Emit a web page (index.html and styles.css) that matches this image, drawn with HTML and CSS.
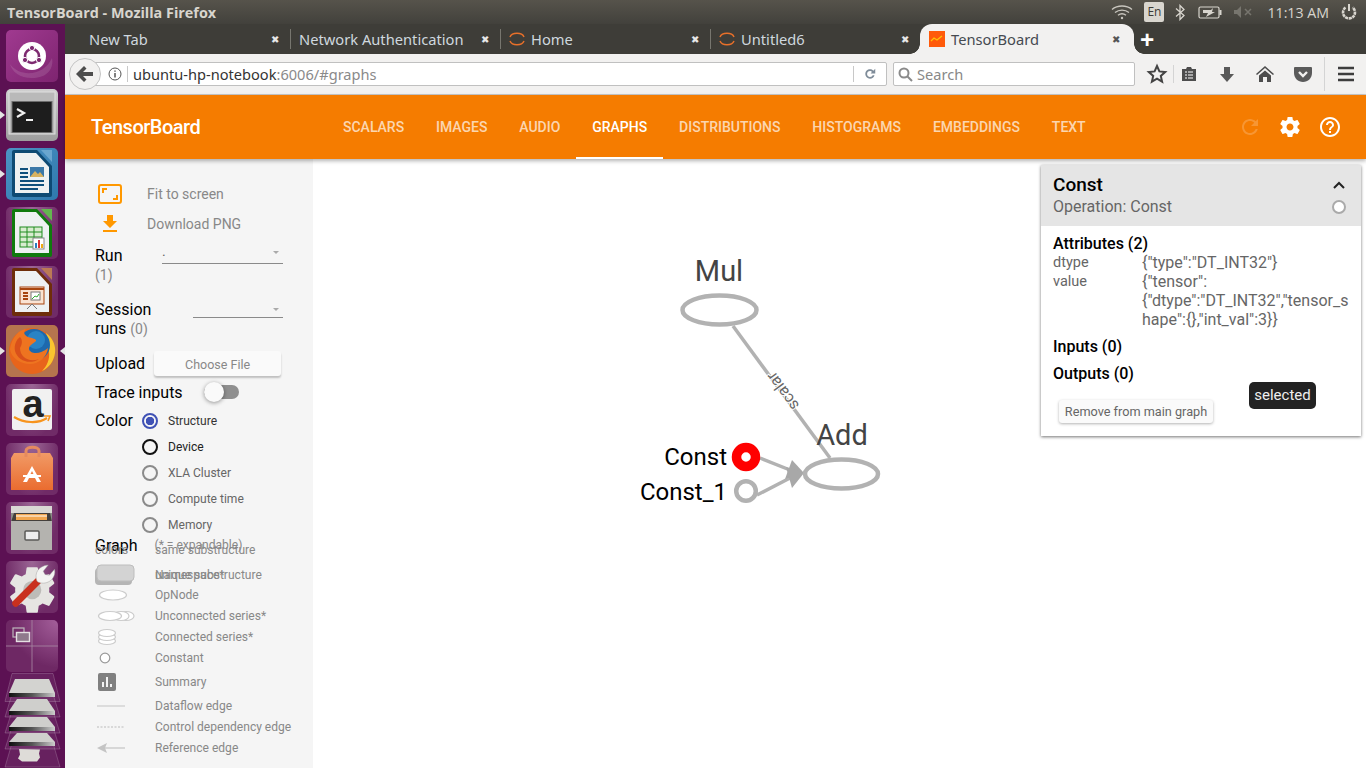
FILE: index.html
```html
<!DOCTYPE html>
<html lang="en">
<head>
    <meta charset="UTF-8">
    <meta name="viewport" content="width=device-width, initial-scale=1.0">
    <title>TensorBoard - Mozilla Firefox</title>
    <link rel="stylesheet" href="styles.css">
</head>
<body>

    <!-- desktop top panel -->
    <div class="panel-top">
        <span class="window-title">TensorBoard - Mozilla Firefox</span>
        <div class="tray">
            <svg class="tray-wifi" width="22" height="16" viewBox="0 0 22 16" fill="none" stroke="#c9c6bf" stroke-width="1.4"><path d="M1 5.5c5.500-4.600 14.500-4.600 20 0"/><path d="M4 8.500c4-3.200 10-3.200 14 0"/><path d="M7 11.200c2.400-1.800 5.600-1.800 8 0"/><circle cx="11" cy="14" r="1.200" fill="#c9c6bf" stroke="none"/></svg>
            <span class="tray-lang">En</span>
            <svg class="tray-bt" width="10" height="17" viewBox="0 0 10 17" fill="none" stroke="#d8d5ce" stroke-width="1.300"><path d="M1 4.500l8 7-4 4v-14l4 4-8 7"/></svg>
            <svg class="tray-battery" width="24" height="13" viewBox="0 0 24 13"><rect x="1" y="1" width="20" height="11" rx="1.500" fill="none" stroke="#d8d5ce" stroke-width="1.200"/><rect x="21.500" y="4" width="2" height="5" fill="#d8d5ce"/><path d="M5 4h8l2-2-1 4h3l-9 5 2-4H5z" fill="#d8d5ce"/></svg>
            <svg class="tray-volume" width="19" height="12" viewBox="0 0 19 12"><path d="M0 4h3l4-4v12l-4-4H0z" fill="#77756e"/><path d="M11 3l6 6M17 3l-6 6" stroke="#77756e" stroke-width="1.500"/></svg>
            <span class="tray-clock">11:13 AM</span>
            <svg class="tray-power" width="16" height="17" viewBox="0 0 16 17" fill="none" stroke="#d8d5ce" stroke-width="2"><path d="M8 0v7"/><path d="M4.500 3.500a6 6 0 1 0 7 0" stroke-width="2.600" stroke-dasharray="3 .6"/></svg>
        </div>
    </div>

    <div class="desktop">

        <!-- unity launcher -->
        <nav class="launcher">
            <div class="tile tile-dash">
                <svg width="52" height="52" viewBox="0 0 52 52"><path d="M4 34c10 14 34 12 42-6 2 10-4 20-20 20-12 0-20-6-22-14z" fill="#fff" fill-opacity=".12"/><circle cx="26" cy="26" r="14" fill="#fff"/><circle cx="26" cy="26" r="7" fill="none" stroke="#7d2a70" stroke-width="2.600"/><circle cx="26" cy="18" r="2.600" fill="#7d2a70" stroke="#fff"/><circle cx="19" cy="30" r="2.600" fill="#7d2a70" stroke="#fff"/><circle cx="33" cy="30" r="2.600" fill="#7d2a70" stroke="#fff"/></svg>
            </div>
            <div class="tile tile-terminal has-pip">
                <svg width="52" height="52" viewBox="0 0 52 52"><rect x="3" y="3" width="46" height="42" fill="#b9b9b9" stroke="#e0e0e0"/><rect x="5.500" y="12" width="41" height="32" fill="#6d6d6d"/><rect x="6.500" y="13" width="39" height="30" fill="#1d1d1d"/><path d="M11 20l7 4-7 4" fill="none" stroke="#f0f0f0" stroke-width="2.200"/><path d="M20 31h7" stroke="#f0f0f0" stroke-width="2"/></svg>
            </div>
            <div class="tile tile-writer has-pip">
                <svg width="52" height="52" viewBox="0 0 52 52"><path d="M35 2h11v12z" fill="#6aa6cf"/><path d="M6 4a2 2 0 0 1 2-2h23l15 16v29a2 2 0 0 1-2 2H8a2 2 0 0 1-2-2z" fill="#0e4a73"/><path d="M9 5h21l13 14v26H9z" fill="#eef1f2"/><path d="M14 21h8M14 25h8M14 29h8M14 33h24M14 37h24M14 41h18" stroke="#10507c" stroke-width="2"/><rect x="24" y="19" width="14" height="10" fill="#3b78a8"/><path d="M24 29l5-6 3 3 2-2 4 5z" fill="#d9b25f"/></svg>
            </div>
            <div class="tile tile-calc">
                <svg width="52" height="52" viewBox="0 0 52 52"><path d="M35 2h11v12z" fill="#63b64f"/><path d="M6 4a2 2 0 0 1 2-2h23l15 16v30a2 2 0 0 1-2 2H8a2 2 0 0 1-2-2z" fill="#0f7a0d"/><path d="M9 5h21l13 14v27H9z" fill="#eef1f2"/><rect x="14" y="20" width="22" height="20" fill="#d8ecd0" stroke="#1f8c1f"/><path d="M14 25h22M14 30h22M14 35h22M21 20v20M28 20v20" stroke="#1f8c1f"/><rect x="27" y="31" width="11" height="11" fill="#fff" stroke="#888"/><rect x="29" y="36" width="2" height="5" fill="#2a7ec0"/><rect x="32" y="33" width="2" height="8" fill="#d33"/><rect x="35" y="37" width="2" height="4" fill="#ea1"/></svg>
            </div>
            <div class="tile tile-impress">
                <svg width="52" height="52" viewBox="0 0 52 52"><path d="M35 2h11v12z" fill="#bb7a55"/><path d="M6 4a2 2 0 0 1 2-2h23l15 16v30a2 2 0 0 1-2 2H8a2 2 0 0 1-2-2z" fill="#6e2d0a"/><path d="M9 5h21l13 14v27H9z" fill="#eef1f2"/><rect x="14" y="21" width="24" height="17" fill="#fae3d2" stroke="#a8450f"/><path d="M14 23h24" stroke="#a8450f" stroke-width="2"/><path d="M17 27h5M17 30h5M17 33h5" stroke="#a8450f" stroke-width="2"/><rect x="25" y="26" width="9" height="8" fill="#fff" stroke="#777"/><path d="M26 33l3-3 2 1 2-3" stroke="#3a3" fill="none"/><path d="M26 38l-5 5M26 38l5 5" stroke="#777"/></svg>
            </div>
            <div class="tile tile-firefox has-pip has-active">
                <svg width="52" height="52" viewBox="0 0 52 52"><circle cx="26" cy="26" r="23" fill="#e8641b"/><path d="M40 8c7 5 10 13 9 20-1 8-6 15-13 18 5-5 8-12 7-19 0-6-1-13-3-19z" fill="#f9c52f"/><circle cx="28" cy="20" r="16" fill="#1d69ad"/><circle cx="30" cy="15" r="9" fill="#2f8fce" fill-opacity=".7"/><path d="M4 24C6 12 13 5 20 4c-3 3-2 6 2 8 4 1 9 2 8 4-3 3-7 4-7 8 1 5 11 6 19-1-1 9-9 16-18 16S5 33 4 24z" fill="#ee7420"/><path d="M14 12c3 3 2 8 0 11 0 9 9 15 19 11-9 6-21 2-24-8-1-6 1-11 5-14z" fill="#d9501a"/></svg>
            </div>
            <div class="tile tile-amazon">
                <svg width="52" height="52" viewBox="0 0 52 52"><rect x="6" y="5" width="40" height="41" rx="2" fill="#f1f1f1"/><text x="27" y="33" class="amazon-a">a</text><path d="M8 33c10 6 24 7 33 1" fill="none" stroke="#f7941d" stroke-width="2.200"/><path d="M38 32l6 0-2 5" fill="none" stroke="#f7941d" stroke-width="1.600"/></svg>
            </div>
            <div class="tile tile-software">
                <svg width="52" height="52" viewBox="0 0 52 52"><defs><linearGradient id="bagFill" x1="0" y1="0" x2="0" y2="1"><stop offset="0" stop-color="#f19a66"/><stop offset="1" stop-color="#ea6c2f"/></linearGradient></defs><path d="M8 10h36l3 5v32H5V15z" fill="url(#bagFill)"/><path d="M20 14V8c0-5 13-5 13 0v6" fill="none" stroke="#e58a5f" stroke-width="3"/><path d="M26 23l-9 16h4l2-4h6l2 4h4zM24.500 31l1.500-3 1.500 3z" fill="#fff"/><path d="M17 33h18" stroke="#fff" stroke-width="2"/></svg>
            </div>
            <div class="tile tile-files">
                <svg width="52" height="52" viewBox="0 0 52 52"><rect x="5" y="4" width="41" height="44" rx="1" fill="#8c8c88"/><rect x="5" y="4" width="41" height="7" fill="#d9d8d4"/><path d="M8 11h36l2 9H5z" fill="#44403c"/><path d="M10 12h31v6H10z" fill="#f1a64f"/><path d="M10 14h31" stroke="#fff"/><rect x="5" y="19" width="41" height="29" fill="#b4b3af"/><rect x="19" y="29" width="14" height="9" rx="1" fill="#eee" stroke="#5b5b58" stroke-width="1.500"/></svg>
            </div>
            <div class="tile tile-settings">
                <svg width="52" height="52" viewBox="0 0 24 24"><path fill="#e6e5e2" transform="translate(-.5 .8) scale(1.050)" d="M19.430 12.980c.04-.32.07-.64.07-.98s-.03-.66-.07-.98l2.110-1.650c.19-.15.24-.42.12-.64l-2-3.460c-.12-.22-.39-.3-.61-.22l-2.490 1c-.52-.4-1.080-.73-1.690-.98l-.38-2.650C14.460 2.180 14.250 2 14 2h-4c-.25 0-.46.18-.49.42l-.38 2.650c-.61.25-1.170.59-1.690.98l-2.490-1c-.23-.09-.49 0-.61.22l-2 3.460c-.13.22-.07.49.12.64l2.110 1.650c-.04.32-.07.65-.07.98s.03.66.07.98l-2.110 1.650c-.19.15-.24.42-.12.64l2 3.460c.12.22.39.3.61.22l2.490-1c.52.4 1.080.73 1.690.98l.38 2.650c.03.24.24.42.49.42h4c.25 0 .46-.18.49-.42l.38-2.650c.61-.25 1.170-.59 1.690-.98l2.490 1c.23.09.49 0 .61-.22l2-3.460c.12-.22.07-.49-.12-.64l-2.110-1.650z"/><circle cx="12.100" cy="13.400" r="4.200" fill="#bdbcb8"/><path d="M4.500 19.500L15 9" stroke="#c9301e" stroke-width="3.200" stroke-linecap="round"/><path d="M14.300 9.300C12.800 5.500 15.200 2.200 19.500 1.800L17.200 4.700l.8 1.500 2 .4 2.400-2.800c1 4-3.200 7.700-7.400 6z" fill="#f4f4f2" stroke="#999" stroke-width=".2"/></svg>
            </div>
            <div class="tile tile-workspace">
                <svg width="52" height="52" viewBox="0 0 52 52"><path d="M26 0v52M0 26h52" stroke="#a98aa5" stroke-width=".8"/><rect x="7" y="8" width="11" height="9" fill="none" stroke="#bdb7bb" stroke-width="1.200"/><rect x="10.500" y="12.500" width="13" height="9" fill="#8f7a8c" stroke="#e5e0e3" stroke-width="1.400"/></svg>
            </div>
            <div class="trash-stack">
                <svg width="65" height="96" viewBox="0 0 65 96">
                    <defs><linearGradient id="discBand" x1="0" y1="0" x2="1" y2="0"><stop offset="0" stop-color="#111"/><stop offset=".5" stop-color="#555"/><stop offset="1" stop-color="#ccc"/></linearGradient></defs>
                    <g fill="#fff" fill-opacity=".07" stroke="#fff" stroke-opacity=".18">
                        <path d="M12 .5h41l7 28H5z"/>
                        <path d="M12 21h41l7 23H5z"/>
                        <path d="M12 38h41l7 22H5z"/>
                        <path d="M12 54h41l7 22H5z"/>
                        <path d="M12 70h41l7 24H5z"/>
                    </g>
                    <path d="M15 6h34l6 14H9z" fill="#d3d3d0"/><rect x="9" y="20" width="46" height="4" fill="url(#discBand)"/>
                    <path d="M17 26h30l8 12H9z" fill="#cfcfcc"/><rect x="9" y="38" width="46" height="4" fill="url(#discBand)"/>
                    <path d="M17 44h30l8 10H9z" fill="#cfcfcc"/><rect x="9" y="54" width="46" height="4" fill="url(#discBand)"/>
                    <path d="M17 60h30l8 9H9z" fill="#cfcfcc"/><rect x="9" y="69" width="46" height="4" fill="url(#discBand)"/>
                    <path d="M19 76l21 .5-1 4 1 4-3 4H22l-4-3 2-4z" fill="#dedcd8"/>
                </svg>
            </div>
        </nav>

        <div class="browser">
            <!-- firefox tab strip -->
            <div class="tabstrip">
                <div class="tab tab-first"><span class="tab-label">New Tab</span><span class="tab-close">&#10006;</span></div>
                <div class="tab"><span class="tab-label">Network Authentication</span><span class="tab-close">&#10006;</span></div>
                <div class="tab">
                    <svg class="favicon" width="16" height="16" viewBox="0 0 16 16" fill="none" stroke="#e8702a" stroke-width="1.500"><path d="M1 6c2-5 12-5 14 0"/><path d="M1 10c2 5 12 5 14 0"/></svg>
                    <span class="tab-label">Home</span><span class="tab-close">&#10006;</span>
                </div>
                <div class="tab">
                    <svg class="favicon" width="16" height="16" viewBox="0 0 16 16" fill="none" stroke="#e8702a" stroke-width="1.500"><path d="M1 6c2-5 12-5 14 0"/><path d="M1 10c2 5 12 5 14 0"/></svg>
                    <span class="tab-label">Untitled6</span><span class="tab-close">&#10006;</span>
                </div>
                <div class="tab tab-active">
                    <svg class="favicon" width="16" height="16" viewBox="0 0 16 16"><rect width="16" height="16" fill="#ff5a0a"/><path d="M2 10l3-3 3 2 5-4" fill="none" stroke="#ffc107" stroke-width="1.300"/></svg>
                    <span class="tab-label">TensorBoard</span><span class="tab-close">&#10006;</span>
                </div>
                <span class="tab-new">+</span>
            </div>

            <!-- firefox nav bar -->
            <div class="navbar">
                <div class="back-btn">
                    <svg width="18" height="16" viewBox="0 0 18 16"><path d="M8 0l2.500 2.500L7 6h10v4H7l3.500 3.500L8 16 0 8z" fill="#4d4d4d"/></svg>
                </div>
                <div class="urlbar">
                    <svg class="info-icon" width="14" height="14" viewBox="0 0 14 14" fill="none" stroke="#555"><circle cx="7" cy="7" r="6"/><path d="M7 6v4.500M7 3.500v1.300" stroke-width="1.500"/></svg>
                    <span class="url-sep"></span>
                    <span class="url-host">ubuntu-hp-notebook</span><span class="url-rest">:6006/#graphs</span>
                    <span class="url-sep url-sep-end"></span>
                    <svg class="reload-icon" width="14" height="14" viewBox="0 0 24 24"><path fill="#7f8c99" d="M17.650 6.350C16.200 4.900 14.210 4 12 4c-4.420 0-7.990 3.580-7.990 8s3.570 8 7.990 8c3.730 0 6.840-2.550 7.730-6h-3.080c-.82 1.330-2.040 3-4.650 3-2.760 0-5-2.240-5-5s2.240-5 5-5c1.660 0 2.640.69 3.220 1.780L13 11h8V3l-3.350 3.350z"/></svg>
                </div>
                <div class="searchbar">
                    <svg width="15" height="15" viewBox="0 0 15 15" fill="none" stroke="#8a8a8a" stroke-width="2"><circle cx="6" cy="6" r="4.500"/><path d="M9.500 9.500L14 14"/></svg>
                    <span>Search</span>
                </div>
                <div class="tool-icons">
                    <svg class="tool tool-star" width="24" height="24" viewBox="0 0 24 24"><path d="M12 4l2.400 5.400 5.800.6-4.400 3.900 1.300 5.700-5.100-3-5.100 3 1.300-5.700L3.800 10l5.800-.6z" fill="none" stroke="#444" stroke-width="2"/></svg>
                    <span class="tool-sep"></span>
                    <svg class="tool" width="24" height="24" viewBox="0 0 24 24"><path d="M5 7h4l1-2h4l1 2h4v12H5z" fill="#4d4d4d"/><path d="M8 10h2M11 10h5M8 13h2M11 13h5M8 16h2M11 16h5" stroke="#fff" stroke-width="1.200"/></svg>
                    <svg class="tool" width="24" height="24" viewBox="0 0 24 24"><path d="M9 5h6v7h4l-7 8-7-8h4z" fill="#595959"/></svg>
                    <svg class="tool" width="24" height="24" viewBox="0 0 24 24"><path d="M12 4L3 12l1 1 8-7 8 7 1-1z" fill="#4d4d4d"/><path d="M6 13.500l6-5 6 5V20h-4v-5h-4v5H6z" fill="#4d4d4d"/></svg>
                    <svg class="tool" width="24" height="24" viewBox="0 0 24 24"><path d="M4 5h16a1 1 0 0 1 1 1v5c0 5-4 9-9 9s-9-4-9-9V6a1 1 0 0 1 1-1z" fill="#5a5a5a"/><path d="M8 10l4 4 4-4" fill="none" stroke="#f2f1f0" stroke-width="2.400"/></svg>
                    <span class="tool-sep tool-sep-menu"></span>
                    <svg class="tool" width="24" height="24" viewBox="0 0 24 24"><path d="M4 6h16M4 12h16M4 18h16" stroke="#3d3d3d" stroke-width="2.600"/></svg>
                </div>
            </div>

            <!-- tensorboard toolbar -->
            <header class="tb-header">
                <span class="tb-title">TensorBoard</span>
                <div class="tb-tabs">
                    <a class="tb-tab">Scalars</a>
                    <a class="tb-tab">Images</a>
                    <a class="tb-tab">Audio</a>
                    <a class="tb-tab tb-tab-on">Graphs</a>
                    <a class="tb-tab">Distributions</a>
                    <a class="tb-tab">Histograms</a>
                    <a class="tb-tab">Embeddings</a>
                    <a class="tb-tab">Text</a>
                </div>
                <div class="tb-actions">
                    <svg class="tb-reload" width="24" height="24" viewBox="0 0 24 24"><path d="M17.650 6.350C16.200 4.900 14.210 4 12 4c-4.420 0-7.990 3.580-7.990 8s3.570 8 7.990 8c3.730 0 6.840-2.550 7.730-6h-2.080c-.82 2.330-3.040 4-5.650 4-3.310 0-6-2.690-6-6s2.690-6 6-6c1.660 0 3.140.69 4.220 1.780L13 11h7V4l-2.350 2.350z"/></svg>
                    <svg width="24" height="24" viewBox="0 0 24 24"><path d="M19.430 12.980c.04-.32.07-.64.07-.98s-.03-.66-.07-.98l2.110-1.650c.19-.15.24-.42.12-.64l-2-3.460c-.12-.22-.39-.3-.61-.22l-2.490 1c-.52-.4-1.080-.73-1.690-.98l-.38-2.650C14.460 2.180 14.250 2 14 2h-4c-.25 0-.46.18-.49.42l-.38 2.650c-.61.25-1.170.59-1.690.98l-2.490-1c-.23-.09-.49 0-.61.22l-2 3.460c-.13.22-.07.49.12.64l2.110 1.650c-.04.32-.07.65-.07.98s.03.66.07.98l-2.110 1.650c-.19.15-.24.42-.12.64l2 3.460c.12.22.39.3.61.22l2.490-1c.52.4 1.080.73 1.690.98l.38 2.650c.03.24.24.42.49.42h4c.25 0 .46-.18.49-.42l.38-2.650c.61-.25 1.170-.59 1.690-.98l2.490 1c.23.09.49 0 .61-.22l2-3.460c.12-.22.07-.49-.12-.64l-2.110-1.650zM12 15.500c-1.930 0-3.500-1.570-3.500-3.500s1.570-3.500 3.500-3.500 3.500 1.570 3.500 3.500-1.570 3.500-3.500 3.500z"/></svg>
                    <svg width="24" height="24" viewBox="0 0 24 24"><path d="M11 18h2v-2h-2v2zm1-16C6.480 2 2 6.480 2 12s4.480 10 10 10 10-4.480 10-10S17.520 2 12 2zm0 18c-4.410 0-8-3.590-8-8s3.590-8 8-8 8 3.590 8 8-3.590 8-8 8zm0-14c-2.210 0-4 1.790-4 4h2c0-1.100.9-2 2-2s2 .9 2 2c0 2-3 1.750-3 5h2c0-2.250 3-2.500 3-5 0-2.210-1.790-4-4-4z"/></svg>
                </div>
            </header>

            <div class="tb-main">
                <!-- graph controls -->
                <aside class="sidebar">
                    <div class="action">
                        <svg width="24" height="20" viewBox="0 0 24 20" fill="none" stroke="#ff9800"><rect x="1" y="1" width="22" height="18" rx="2" stroke-width="2"/><path d="M5 9V5h4M19 11v4h-4" stroke-width="2"/></svg>
                        <span>Fit to screen</span>
                    </div>
                    <div class="action">
                        <svg width="24" height="24" viewBox="0 0 24 24"><path fill="#ff9800" d="M19 9h-4V3H9v6H5l7 7 7-7zM5 18v2h14v-2H5z"/></svg>
                        <span>Download PNG</span>
                    </div>

                    <div class="run-row">
                        <span class="field-label">Run</span>
                        <div class="select select-run"><span>.</span><i class="caret"></i></div>
                    </div>
                    <div class="count count-run">(1)</div>

                    <div class="session-row">
                        <span class="field-label">Session<br>runs <small class="count">(0)</small></span>
                        <div class="select select-session"><i class="caret"></i></div>
                    </div>

                    <div class="upload-row">
                        <span class="field-label">Upload</span>
                        <div class="file-btn">Choose File</div>
                    </div>

                    <div class="trace-row">
                        <span class="field-label">Trace inputs</span>
                        <div class="toggle"><i class="toggle-knob"></i></div>
                    </div>

                    <div class="color-block">
                        <span class="field-label">Color</span>
                        <div class="radios">
                            <div class="radio radio-on"><i></i>Structure</div>
                            <div class="radio radio-dark"><i></i>Device</div>
                            <div class="radio"><i></i>XLA Cluster</div>
                            <div class="radio"><i></i>Compute time</div>
                            <div class="radio"><i></i>Memory</div>
                        </div>
                    </div>

                    <div class="graph-row">
                        <span class="field-label">Graph</span>
                        <span class="graph-note">(* = expandable)</span>
                    </div>

                    <div class="legend">
                        <span class="key-colors">colors</span>
                        <span class="key-first">same substructure</span>
                        <svg class="key-ns" width="40" height="22" viewBox="0 0 40 22"><rect x="0" y="4" width="37" height="17" rx="4" fill="#b5b5b5"/><rect x="2" y="1" width="37" height="16" rx="4" fill="#d3d3d3" stroke="#bdbdbd"/></svg>
                        <span class="key-overlap">unique substructure</span>
                        <span class="key-overlap">Namespace*</span>
                        <svg width="40" height="14" viewBox="0 0 40 14"><ellipse cx="18" cy="7" rx="13.500" ry="5" fill="#fff" stroke="#ccc" stroke-width="1.200"/></svg>
                        <span>OpNode</span>
                        <svg width="40" height="14" viewBox="0 0 40 14" fill="#fff" stroke="#ccc" stroke-width="1.200"><ellipse cx="31" cy="7" rx="8" ry="4.500"/><ellipse cx="26" cy="7" rx="8" ry="4.500"/><ellipse cx="15" cy="7" rx="11.500" ry="4.500"/></svg>
                        <span>Unconnected series*</span>
                        <svg width="40" height="18" viewBox="0 0 40 18" fill="#fff" stroke="#ccc" stroke-width="1.200"><ellipse cx="12" cy="13" rx="8.500" ry="3.500"/><ellipse cx="12" cy="9" rx="8.500" ry="3.500"/><ellipse cx="12" cy="5" rx="8.500" ry="3.500"/></svg>
                        <span>Connected series*</span>
                        <svg width="40" height="14" viewBox="0 0 40 14"><circle cx="10" cy="7" r="4.800" fill="#fff" stroke="#999" stroke-width="1.200"/></svg>
                        <span>Constant</span>
                        <svg width="40" height="18" viewBox="0 0 40 18"><rect x="3" y="0" width="18" height="18" rx="2" fill="#808080"/><path d="M8 9v5M12 4v10M16 11v3" stroke="#fff" stroke-width="1.800"/></svg>
                        <span>Summary</span>
                        <svg width="40" height="4" viewBox="0 0 40 4"><path d="M2 2h28" stroke="#ccc" stroke-width="1.200"/></svg>
                        <span>Dataflow edge</span>
                        <svg width="40" height="4" viewBox="0 0 40 4"><path d="M2 2h28" stroke="#bbb" stroke-width="1.200" stroke-dasharray="2 1.500"/></svg>
                        <span>Control dependency edge</span>
                        <svg width="40" height="14" viewBox="0 0 40 14"><path d="M2 7l10-5-2 5 2 5z" fill="#c4c4c4"/><path d="M8 7h22" stroke="#c4c4c4" stroke-width="1.200"/></svg>
                        <span>Reference edge</span>
                    </div>
                </aside>

                <!-- graph canvas -->
                <section class="canvas">
                    <svg class="graph" width="1053" height="609" viewBox="313 159 1053 609">
                        <path class="edge" d="M733 326L830 458"/>
                        <path class="edge" d="M760 458L790 470"/>
                        <path class="edge" d="M757 495L790 478"/>
                        <path class="arrow" d="M804 473L792 460L785 479z"/>
                        <path class="arrow" d="M804 473L786 467L792 488z"/>
                        <text class="edge-label" transform="translate(783 391) rotate(233.700)" y="5">scalar</text>
                        <ellipse class="node" cx="719.500" cy="310" rx="37" ry="14.500"/>
                        <ellipse class="node" cx="841.500" cy="474" rx="36.500" ry="14.500"/>
                        <circle class="node-picked" cx="746" cy="457" r="9.500"/>
                        <circle class="node-const" cx="746" cy="491" r="9.800"/>
                        <text class="node-title" x="719" y="281">Mul</text>
                        <text class="node-title" x="842" y="445">Add</text>
                        <text class="const-label" x="727" y="465">Const</text>
                        <text class="const-label" x="727" y="500">Const_1</text>
                    </svg>

                    <div class="info-card">
                        <div class="info-head">
                            <div class="info-title">
                                <span class="info-name">Const</span>
                                <svg width="14" height="10" viewBox="0 0 14 10"><path d="M2 8l5-5 5 5" fill="none" stroke="#222" stroke-width="2"/></svg>
                            </div>
                            <div class="info-sub">
                                <span>Operation: Const</span>
                                <i class="info-dot"></i>
                            </div>
                        </div>
                        <div class="info-body">
                            <div class="info-section">Attributes (2)</div>
                            <div class="attr"><span class="attr-key">dtype</span><span class="attr-val">{"type":"DT_INT32"}</span></div>
                            <div class="attr"><span class="attr-key">value</span><span class="attr-val">{"tensor":<br>{"dtype":"DT_INT32","tensor_s<br>hape":{},"int_val":3}}</span></div>
                            <div class="info-section info-inputs">Inputs (0)</div>
                            <div class="info-section info-outputs">Outputs (0)</div>
                            <div class="info-foot">
                                <div class="remove-btn">Remove from main graph</div>
                                <div class="tooltip">selected</div>
                            </div>
                        </div>
                    </div>
                </section>
            </div>
        </div>
    </div>

</body>
</html>
```

FILE: styles.css
```css
* {
    box-sizing: border-box;
}

html, body {
    margin: 0;
    height: 768px;
    overflow: hidden;
}

body {
    font-family: 'Roboto', 'Liberation Sans', sans-serif;
    background-color: #fff;
}

svg {
    display: block;
    flex: none;
}

/* top panel */
.panel-top {
    height: 24px;
    display: flex;
    align-items: center;
    justify-content: space-between;
    background: linear-gradient(#56534b, #42413c);
    font-family: 'Open Sans', 'Noto Sans', sans-serif;
}

.window-title {
    margin-left: 7px;
    font-size: 14.4px;
    font-weight: 700;
    color: #d8d5ce;
}

.tray {
    display: flex;
    align-items: center;
}

.tray-wifi { margin-right: 11px; }

.tray-lang {
    width: 20px;
    height: 20px;
    margin-right: 11px;
    background-color: #d9d6cf;
    border-radius: 2px;
    color: #3c3b37;
    font-size: 12px;
    line-height: 20px;
    text-align: center;
}

.tray-bt { margin-right: 13px; }
.tray-battery { margin-right: 12px; }
.tray-volume { margin-right: 14px; }

.tray-clock {
    margin-right: 12px;
    font-size: 14.2px;
    color: #d8d5ce;
}

.tray-power { margin-right: 9px; }

.desktop {
    display: flex;
    height: 744px;
}

/* launcher */
.launcher {
    width: 65px;
    flex: none;
    padding: 6px 0 0 6px;
    display: flex;
    flex-direction: column;
    gap: 7px;
    background-color: #5c1153;
}

.tile {
    width: 52px;
    height: 52px;
    flex: none;
    position: relative;
    border-radius: 5px;
    background: radial-gradient(ellipse at 50% 0, #9b6695, #702b67 75%);
}

.tile-dash { background: linear-gradient(135deg, #a03a90, #7e2470); }
.tile-terminal { background: linear-gradient(#cfcfcf, #9d9d9d); }
.tile-writer { background: linear-gradient(135deg, #4c93c4, #2e78ad); }
.tile-firefox { background: #b5744e; }
.tile-workspace { background: radial-gradient(ellipse at 100% 0, #a45f9b, #6e2864 65%); }

.has-pip::before {
    content: "";
    position: absolute;
    left: -6px;
    top: 22px;
    border: 4px solid transparent;
    border-left: 5px solid #e4e4e4;
}

.has-active::after {
    content: "";
    position: absolute;
    right: -7px;
    top: 22px;
    border: 4px solid transparent;
    border-right: 5px solid #e4e4e4;
}

.amazon-a {
    font-family: 'Liberation Sans', sans-serif;
    font-size: 38px;
    font-weight: 700;
    fill: #222;
    text-anchor: middle;
}

.trash-stack {
    margin: -6px 0 0 -6px;
}

.browser {
    flex: 1;
    min-width: 0;
    display: flex;
    flex-direction: column;
}

/* tab strip */
.tabstrip {
    height: 30px;
    flex: none;
    display: flex;
    background-color: #3e3d38;
    font-family: 'Noto Sans', 'Open Sans', sans-serif;
    font-size: 14.7px;
    color: #cfd8df;
}

.tab {
    width: 210px;
    flex: none;
    display: flex;
    align-items: center;
    padding-left: 9px;
    position: relative;
}

.tab::before {
    content: "";
    position: absolute;
    left: 0;
    top: 5px;
    bottom: 5px;
    width: 1px;
    background-color: #77766f;
}

.tab-first {
    width: 225px;
    padding-left: 24px;
}

.tab-first::before {
    display: none;
}

.favicon {
    margin-right: 6px;
}

.tab-close {
    margin-left: auto;
    margin-right: 11px;
    font-size: 10px;
    color: #e8e8e8;
}

.tab-active {
    width: 214px;
    padding-left: 9px;
    background-color: #f2f1f0;
    border-radius: 12px 12px 0 0;
    color: #454a50;
}

.tab-active::before {
    left: -10px;
    top: auto;
    bottom: 0;
    width: 10px;
    height: 10px;
    background: radial-gradient(circle at 0 0, transparent 9.500px, #f2f1f0 10px);
}

.tab-active::after {
    content: "";
    position: absolute;
    right: -10px;
    bottom: 0;
    width: 10px;
    height: 10px;
    background: radial-gradient(circle at 100% 0, transparent 9.500px, #f2f1f0 10px);
}

.tab-active .tab-close {
    margin-right: 14px;
    color: #555;
}

.tab-new {
    margin-left: 6px;
    font-size: 25px;
    font-weight: 700;
    line-height: 30px;
    color: #fff;
}

/* nav bar */
.navbar {
    height: 41px;
    flex: none;
    display: flex;
    align-items: center;
    padding-left: 4px;
    background-color: #f2f1f0;
    border-bottom: 1px solid #c8c8c8;
    font-family: 'Noto Sans', 'Open Sans', sans-serif;
    font-size: 14.6px;
}

.back-btn {
    width: 32px;
    height: 32px;
    z-index: 1;
    display: flex;
    align-items: center;
    justify-content: center;
    background-color: #f2f1f0;
    border: 1px solid #c4c4c4;
    border-radius: 50%;
}

.urlbar {
    width: 794px;
    height: 24px;
    margin-left: -8px;
    padding-left: 14px;
    display: flex;
    align-items: center;
    background-color: #fff;
    border: 1px solid #c0c0c0;
    border-radius: 0 2px 2px 0;
}

.info-icon {
    margin-right: 5px;
}

.url-sep {
    width: 1px;
    height: 16px;
    margin-right: 5px;
    background-color: #c8c8c8;
}

.url-host { color: #333; }
.url-rest { color: #8a8a8a; }

.url-sep-end {
    margin-left: auto;
    margin-right: 9px;
}

.reload-icon {
    margin-right: 9px;
}

.searchbar {
    width: 242px;
    height: 24px;
    margin-left: 6px;
    padding-left: 4px;
    display: flex;
    align-items: center;
    gap: 4px;
    background-color: #fff;
    border: 1px solid #c0c0c0;
    border-radius: 2px;
    color: #888;
}

.tool-icons {
    display: flex;
    align-items: center;
    gap: 14px;
    margin-left: 10px;
}

.tool-star {
    margin-right: -10px;
}

.tool-sep {
    width: 1px;
    height: 18px;
    background-color: #d4d4d4;
    margin-right: -11px;
}

.tool-sep-menu {
    height: 34px;
    margin: 0 -5px 0 -5px;
}

/* tensorboard header */
.tb-header {
    height: 64px;
    flex: none;
    display: flex;
    align-items: center;
    position: relative;
    z-index: 2;
    background-color: #f57c00;
    box-shadow: 0 2px 4px rgba(0, 0, 0, 0.3);
    color: #fff;
}

.tb-title {
    width: 262px;
    padding-left: 26px;
    font-size: 20px;
    font-weight: 500;
    letter-spacing: -0.5px;
}

.tb-tabs {
    display: flex;
    align-self: stretch;
}

.tb-tab {
    padding: 0 15.85px 0 16px;
    line-height: 64px;
    font-size: 14px;
    font-weight: 500;
    text-transform: uppercase;
    color: rgba(255, 255, 255, 0.7);
}

.tb-tab-on {
    color: #fff;
    box-shadow: inset 0 -2px 0 #fff;
}

.tb-actions {
    margin-left: auto;
    margin-right: 24px;
    display: flex;
    gap: 16px;
    fill: #fff;
}

.tb-reload {
    fill: rgba(255, 255, 255, 0.2);
}

.tb-main {
    flex: 1;
    min-height: 0;
    display: flex;
}

/* sidebar */
.sidebar {
    width: 248px;
    flex: none;
    padding: 20px 0 0 30px;
    background-color: #f5f5f5;
    color: #888;
    font-size: 12.05px;
}

.action {
    height: 30px;
    display: flex;
    align-items: center;
    gap: 25px;
    padding-left: 3px;
    font-size: 14px;
}

.field-label {
    font-size: 16px;
    color: #000;
    line-height: 19px;
}

.select {
    position: relative;
    height: 21px;
    border-bottom: 1px solid #8a8a8a;
    color: #666;
    font-size: 14px;
    line-height: 16px;
}

.caret {
    position: absolute;
    right: 4px;
    top: 8px;
    border: 3px solid transparent;
    border-top: 3px solid #aaa;
}

.run-row {
    margin-top: 4px;
    height: 24px;
    display: flex;
    align-items: flex-start;
    justify-content: space-between;
    padding-top: 3px;
    width: 188px;
}

.run-row .select {
    margin-top: -3px;
}

.select-run {
    width: 121px;
}

.count {
    font-size: 14px;
    color: #888;
    font-weight: 400;
}

.count-run {
    height: 16px;
    line-height: 17px;
}

.session-row {
    margin-top: 17px;
    width: 188px;
    display: flex;
    justify-content: space-between;
}

.select-session {
    width: 90px;
    height: 18px;
}

.upload-row {
    margin-top: 12px;
    height: 25px;
    display: flex;
    align-items: center;
    gap: 9px;
}

.file-btn {
    width: 127px;
    height: 25px;
    padding-top: 1px;
    background-color: #fafafa;
    border-radius: 3px;
    box-shadow: 0 2px 2px rgba(0, 0, 0, 0.22);
    color: #888;
    font-size: 12.5px;
    line-height: 25px;
    text-align: center;
}

.trace-row {
    margin-top: 4px;
    height: 24px;
    display: flex;
    align-items: center;
    gap: 21px;
}

.toggle {
    position: relative;
    width: 35px;
    height: 14px;
    border-radius: 7px;
    background-color: #8f8f8f;
}

.toggle-knob {
    position: absolute;
    left: 0;
    top: -3px;
    width: 20px;
    height: 20px;
    border-radius: 50%;
    background-color: #fafafa;
    box-shadow: 0 1px 4px rgba(0, 0, 0, 0.4);
}

.color-block {
    margin-top: 4px;
    display: flex;
    gap: 9px;
}

.color-block .field-label {
    line-height: 26px;
}

.radios {
    color: #666;
}

.radio {
    height: 26px;
    display: flex;
    align-items: center;
    gap: 10px;
}

.radio i {
    width: 16px;
    height: 16px;
    border: 2px solid #8a8a8a;
    border-radius: 50%;
}

.radio-on {
    color: #333;
}

.radio-on i {
    border-color: #3f51b5;
    background: radial-gradient(circle, #3f51b5 4px, transparent 4.500px);
}

.radio-dark {
    color: #222;
}

.radio-dark i {
    border-color: #111;
}

.graph-row {
    height: 16px;
    margin-top: -1px;
    display: flex;
    align-items: center;
    gap: 17px;
}

.legend {
    margin-top: -13px;
    display: grid;
    grid-template-columns: 60px 1fr;
    grid-template-rows: 25px 19px 21px 21px 21px 21px 27px 21px 21px 21px;
    align-items: center;
}

.key-colors,
.key-first {
    align-self: start;
    line-height: 20px;
}

.key-ns {
    grid-row: 2;
    grid-column: 1;
    overflow: visible;
}

.key-overlap {
    grid-row: 2;
    grid-column: 2;
    margin-top: 1px;
}

/* graph */
.canvas {
    flex: 1;
    position: relative;
    min-width: 0;
    background-color: #fff;
}

.graph text {
    font-family: 'Roboto', sans-serif;
}

.edge {
    fill: none;
    stroke: #b2b2b2;
    stroke-width: 3.500;
}

.arrow {
    fill: #a8a8a8;
}

.node {
    fill: #fff;
    stroke: #b2b2b2;
    stroke-width: 4.500;
}

.node-picked {
    fill: #fff;
    stroke: #ff0000;
    stroke-width: 9.500;
}

.node-const {
    fill: #fff;
    stroke: #b2b2b2;
    stroke-width: 4.500;
}

.node-title {
    font-size: 29px;
    fill: #444;
    text-anchor: middle;
}

.const-label {
    font-size: 24px;
    fill: #000;
    text-anchor: end;
}

.edge-label {
    font-size: 16px;
    fill: #666;
    stroke: #fff;
    stroke-width: 2px;
    paint-order: stroke;
    text-anchor: middle;
}

/* node info card */
.info-card {
    position: absolute;
    left: 728px;
    top: 6px;
    width: 320px;
    height: 271px;
    background-color: #fff;
    box-shadow: 0 1px 3px rgba(0, 0, 0, 0.55);
}

.info-head {
    height: 61px;
    padding: 8px 15px 0 12px;
    background-color: #e5e5e5;
}

.info-title,
.info-sub {
    display: flex;
    align-items: center;
    justify-content: space-between;
}

.info-name {
    font-size: 19px;
    font-weight: 500;
    line-height: 24px;
    color: #000;
}

.info-sub {
    font-size: 16px;
    line-height: 20px;
    color: #666;
}

.info-dot {
    width: 14px;
    height: 14px;
    background-color: #fff;
    border: 2px solid #aaa;
    border-radius: 50%;
}

.info-body {
    padding: 8px 12px 0;
}

.info-section {
    font-size: 16px;
    font-weight: 500;
    line-height: 19px;
    color: #000;
}

.info-inputs { margin-top: 8px; }
.info-outputs { margin-top: 8px; }

.attr {
    display: flex;
    font-size: 16px;
    line-height: 19px;
    color: #666;
}

.attr-key {
    width: 89px;
    flex: none;
    font-size: 14.5px;
}

.attr-val {
    white-space: nowrap;
}

.info-foot {
    display: flex;
    align-items: flex-start;
    justify-content: space-between;
    padding: 0 33px 0 6px;
}

.remove-btn {
    margin-top: 17px;
    width: 154px;
    height: 23px;
    background-color: #fafafa;
    border-radius: 3px;
    box-shadow: 0 1px 3px rgba(0, 0, 0, 0.3);
    color: #666;
    font-size: 12.7px;
    line-height: 23px;
    text-align: center;
}

.tooltip {
    width: 67px;
    height: 27px;
    margin-top: -1px;
    background-color: #222;
    border-radius: 5px;
    color: #eee;
    font-size: 15px;
    line-height: 27px;
    text-align: center;
}
```
